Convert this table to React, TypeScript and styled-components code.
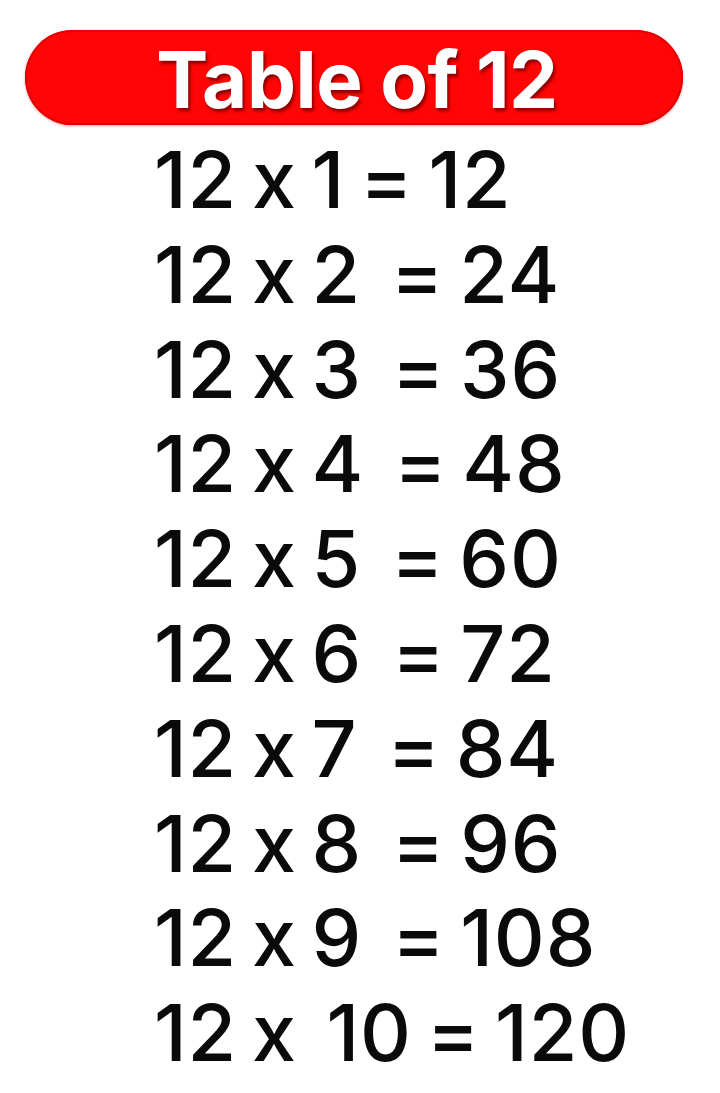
import React from 'react';
import styled, { createGlobalStyle } from 'styled-components';

const GlobalStyle = createGlobalStyle`
	html, body {
		margin: 0;
		padding: 0;
		background: #ffffff;
	}
`;

const Page = styled.div`
	width: 720px;
	height: 1093px;
	box-sizing: border-box;
	padding: 30px 37px 0 25px;
	font-family: Inter, 'Noto Sans', sans-serif;
	color: #0a0a0a;
`;

const TitleBar = styled.div`
	height: 95px;
	border-radius: 48px;
	background: #ff0505;
	box-shadow: inset 0 0 0 2px #e20000, 0 1px 3px rgba(160, 0, 0, 0.35);
	display: flex;
	align-items: center;
	justify-content: center;
`;

const Title = styled.h1`
	margin: 0;
	font-size: 78px;
	font-weight: 700;
	letter-spacing: -0.5px;
	color: #ffffff;
	text-shadow: 2px 3px 3px rgba(90, 0, 0, 0.7);
	line-height: 1;
	padding-top: 4px;
	padding-left: 6px;
`;

const Rows = styled.div`
	display: flex;
	flex-direction: column;
	padding-left: 129px;
	margin-top: 7px;
`;

const Row = styled.div`
	font-size: 79px;
	font-weight: 500;
	line-height: 94.8px;
	white-space: pre;
	letter-spacing: 0.8px;
	word-spacing: -7px;
`;

const rows: string[] = [
	'12 x 1 = 12',
	'12 x 2  = 24',
	'12 x 3  = 36',
	'12 x 4  = 48',
	'12 x 5  = 60',
	'12 x 6  = 72',
	'12 x 7  = 84',
	'12 x 8  = 96',
	'12 x 9  = 108',
	'12 x  10 = 120',
];

const App: React.FC = () => {
	return (
		<React.Fragment>
			<GlobalStyle />
			<Page>
				<TitleBar>
					<Title>Table of 12</Title>
				</TitleBar>
				<Rows>
					{rows.map((row) => (
						<Row key={row}>{row}</Row>
					))}
				</Rows>
			</Page>
		</React.Fragment>
	);
};

export default App;
